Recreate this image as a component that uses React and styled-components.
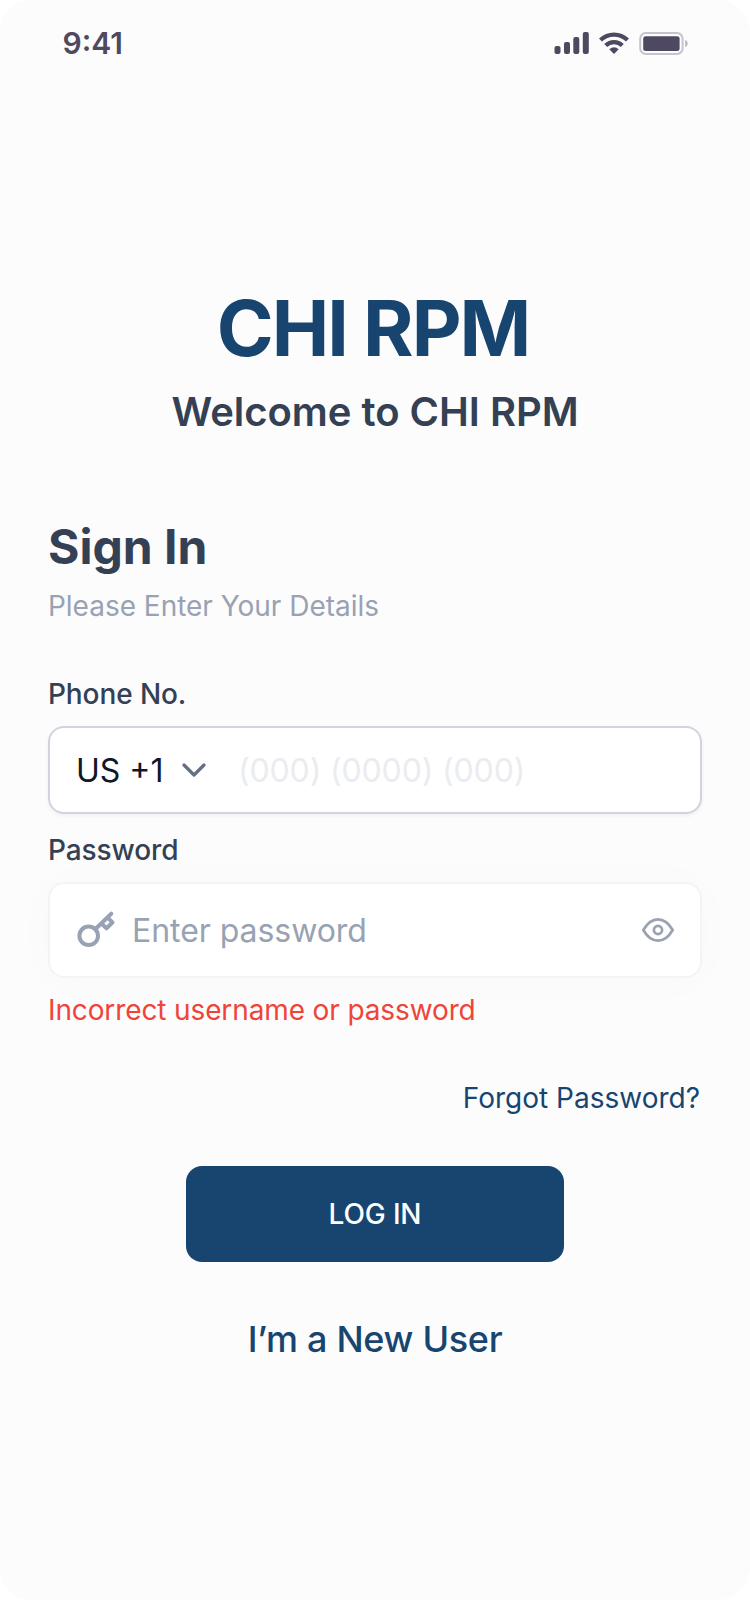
import React from "react";
import styled, { createGlobalStyle } from "styled-components";

const GlobalStyle = createGlobalStyle`
  * { box-sizing: border-box; }
  html, body { margin: 0; background: #fff; }
  body { font-family: Inter, "Liberation Sans", sans-serif; }
`;

const Screen = styled.main`
  width: 750px;
  height: 1600px;
  display: flex;
  flex-direction: column;
  background: #fcfcfc;
  border-radius: 32px;
  overflow: hidden;
`;

const StatusBar = styled.header`
  display: flex;
  align-items: center;
  justify-content: space-between;
  height: 86px;
  padding: 0 61px 0 62.5px;
  color: #4e4960;
`;

const Clock = styled.time`
  font-size: 30px;
  font-weight: 600;
  line-height: 40px;
`;

const StatusIcons = styled.div`
  display: flex;
  align-items: center;
  gap: 9px;
  height: 22px;
  svg { display: block; }
`;

const Brand = styled.section`
  display: flex;
  flex-direction: column;
  align-items: center;
  padding-top: 202px;
`;

const Title = styled.h1`
  margin: 0 4px 0 0;
  font-size: 77px;
  font-weight: 700;
  line-height: 80px;
  letter-spacing: -2px;
  color: #174570;
`;

const Welcome = styled.p`
  margin: 14px 0 0;
  font-size: 40px;
  font-weight: 600;
  line-height: 60px;
  letter-spacing: -0.03px;
  color: #344054;
`;

const Form = styled.form`
  display: flex;
  flex-direction: column;
  padding: 77px 48px 0;
`;

const Heading = styled.h2`
  margin: 0;
  font-size: 48px;
  font-weight: 700;
  line-height: 55px;
  color: #344054;
`;

const Hint = styled.p`
  margin: 12px 0 48px;
  font-size: 28px;
  line-height: 40px;
  letter-spacing: -0.02px;
  color: #98a2b3;
`;

const Label = styled.label`
  margin-top: ${(p) => p.$top || 0}px;
  margin-bottom: 12px;
  font-size: 28px;
  font-weight: 500;
  line-height: 40px;
  letter-spacing: -0.1px;
  color: #344054;
`;

const Field = styled.div`
  display: flex;
  align-items: center;
  height: ${(p) => (p.$soft ? 96 : 88)}px;
  padding: 0 ${(p) => (p.$soft ? 24 : 26)}px 0 26px;
  background: #fff;
  border: 2px solid ${(p) => (p.$soft ? "#f2f4f7" : "#d0d5dd")};
  border-radius: 16px;
  box-shadow: ${(p) =>
    p.$soft ? "0 2px 50px rgba(16, 24, 40, 0.02)" : "0 2px 4px rgba(16, 24, 40, 0.05)"};
  svg { display: block; flex: none; }
`;

const Country = styled.div`
  display: flex;
  align-items: center;
  gap: 17px;
  width: 162px;
  font-size: 32px;
  line-height: 48px;
  color: #101828;
`;

const CountryCode = styled.span`
  padding-top: 2px;
`;

const Placeholder = styled.span`
  flex: 1;
  padding-top: 2px;
  font-size: 32px;
  line-height: 48px;
  white-space: nowrap;
  letter-spacing: ${(p) => p.$spacing || 0}px;
  color: ${(p) => (p.$faint ? "#eaecf0" : "#98a2b3")};
`;

const ErrorText = styled.p`
  margin: 12px 0 0;
  font-size: 28px;
  line-height: 40px;
  letter-spacing: -0.12px;
  color: #f04438;
`;

const Forgot = styled.a`
  align-self: flex-end;
  margin: 48px 2px 0 0;
  font-size: 28px;
  line-height: 40px;
  color: #174570;
`;

const LoginButton = styled.button`
  align-self: center;
  width: 378px;
  height: 96px;
  margin-top: 48px;
  border: 0;
  border-radius: 16px;
  background: #174570;
  color: #fff;
  font: 500 28px/40px Inter, sans-serif;
  letter-spacing: -0.15px;
`;

const NewUser = styled.a`
  align-self: center;
  margin-top: 49px;
  font-size: 36px;
  font-weight: 500;
  line-height: 56px;
  letter-spacing: -0.3px;
  color: #174570;
`;

const Signal = () => (
  <svg width="35" height="22" viewBox="0 0 35 22" fill="currentColor">
    <rect x="0.5" y="14" width="6" height="8" rx="2" />
    <rect x="10" y="10" width="6" height="12" rx="2" />
    <rect x="19.3" y="5" width="6" height="17" rx="2" />
    <rect x="28.8" y="0" width="6" height="22" rx="2" />
  </svg>
);

const Wifi = () => (
  <svg width="32" height="22" viewBox="0 0 32 22" fill="none">
    <path d="M2.500 8A19.500 19.500 0 0 1 29.500 8" stroke="currentColor" strokeWidth="4.3" />
    <path d="M7.700 13.500A12 12 0 0 1 24.300 13.500" stroke="currentColor" strokeWidth="4.3" />
    <path d="M11.300 17.200A7.500 7.500 0 0 1 20.700 17.200L16.500 21.600Q16 22.100 15.500 21.600Z" fill="currentColor" />
  </svg>
);

const Battery = () => (
  <svg width="50" height="23" viewBox="0 0 50 23">
    <rect x="1.2" y="1.1" width="42.400" height="20.800" rx="5.500" fill="none" stroke="#c5c3ce" strokeWidth="2" />
    <rect x="4.2" y="4.2" width="36.400" height="14.700" rx="2.500" fill="currentColor" />
    <path d="M46.200 7.800a4 4 0 0 1 0 7.400z" fill="#b9b7c2" />
  </svg>
);

const Chevron = () => (
  <svg width="26" height="16" viewBox="0 0 26 16" fill="none" stroke="#667085" strokeWidth="3.3" strokeLinecap="round" strokeLinejoin="round">
    <path d="M3 3l10 10 10-10" />
  </svg>
);

const KeyMark = styled.svg`
  margin-right: 16px;
`;

const Key = () => (
  <KeyMark width="40" height="40" viewBox="0 0 40 40" fill="none" stroke="#98a2b3" strokeWidth="4" strokeLinecap="round" strokeLinejoin="round">
    <circle cx="12.7" cy="25.8" r="9.3" />
    <path d="M19.500 19L35.300 3.700M25.500 13.500l5 4.800 6-5.800-4.800-4.800" />
  </KeyMark>
);

const Eye = () => (
  <svg width="36" height="28" viewBox="0 0 36 28" fill="none" stroke="#98a2b3" strokeWidth="2.7" strokeLinejoin="round">
    <path d="M3.300 14C6.500 8.500 11.500 3.300 18 3.300S29.500 8.500 32.700 14C29.500 19.500 24.500 24.700 18 24.700S6.500 19.500 3.300 14Z" />
    <circle cx="18" cy="14" r="4.1" />
  </svg>
);

export default function App() {
  return (
    <>
      <GlobalStyle />
      <Screen>
        <StatusBar>
          <Clock>9:41</Clock>
          <StatusIcons>
            <Signal />
            <Wifi />
            <Battery />
          </StatusIcons>
        </StatusBar>
        <Brand>
          <Title>CHI RPM</Title>
          <Welcome>Welcome to CHI RPM</Welcome>
        </Brand>
        <Form>
          <Heading>Sign In</Heading>
          <Hint>Please Enter Your Details</Hint>
          <Label>Phone No.</Label>
          <Field>
            <Country>
              <CountryCode>US +1</CountryCode>
              <Chevron />
            </Country>
            <Placeholder $faint $spacing={-0.15}>(000) (0000) (000)</Placeholder>
          </Field>
          <Label $top={16}>Password</Label>
          <Field $soft>
            <Key />
            <Placeholder $spacing={-0.05}>Enter password</Placeholder>
            <Eye />
          </Field>
          <ErrorText>Incorrect username or password</ErrorText>
          <Forgot>Forgot Password?</Forgot>
          <LoginButton type="button">LOG IN</LoginButton>
          <NewUser>I’m a New User</NewUser>
        </Form>
      </Screen>
    </>
  );
}
